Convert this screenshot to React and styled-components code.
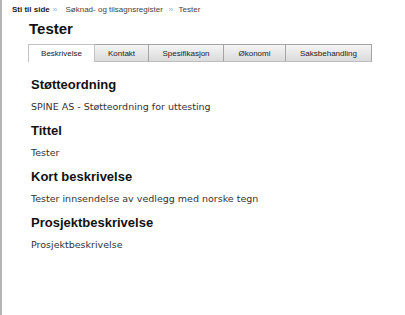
import React from 'react';
import styled, { createGlobalStyle } from 'styled-components';

const Global = createGlobalStyle`
  html, body { margin: 0; padding: 0; background: #fff; }
  body { font-family: "DejaVu Sans", Verdana, sans-serif; }
`;

const Page = styled.div`
  min-height: 315px;
  border-left: 2px solid #b4b4b4;
  box-sizing: border-box;
  padding: 5px 0 0 10px;
`;

const Crumbs = styled.div`
  display: flex;
  align-items: center;
  font-family: "Liberation Sans", Arial, sans-serif;
  font-size: 8px;
  line-height: 10px;
  color: #444;
`;

const CrumbLabel = styled.span`
  font-weight: bold;
  color: #222;
`;

const Sep = styled.span`
  color: #999;
  font-size: 7px;
  letter-spacing: -0.5px;
  margin: 0 ${p => p.$right}px 0 ${p => p.$left}px;
`;

const Title = styled.h1`
  margin: 5px 0 0 17px;
  font-family: "Liberation Sans", Arial, sans-serif;
  font-size: 15px;
  font-weight: bold;
  color: #111;
  line-height: 18px;
`;

const Tabs = styled.div`
  display: flex;
  margin: 6px 0 0 16px;
`;

const Tab = styled.div`
  width: ${p => p.$w}px;
  height: 18px;
  box-sizing: border-box;
  border-top: 1px solid ${p => (p.$active ? '#c4c4c4' : '#a4a4a4')};
  border-right: 1px solid ${p => (p.$active ? '#c4c4c4' : '#a4a4a4')};
  border-bottom: ${p => (p.$active ? 'none' : '1px solid #bdbdbd')};
  border-left: ${p => (p.$active ? '1px solid #c4c4c4' : 'none')};
  background: ${p => (p.$active ? '#fff' : 'linear-gradient(#f5f5f5, #dadada)')};
  font-family: "Liberation Sans", Arial, sans-serif;
  font-size: 8px;
  color: #222;
  display: flex;
  align-items: center;
  justify-content: center;
`;

const Body = styled.div`
  padding: 15px 0 0 19px;
`;

const Section = styled.div`
  margin-bottom: 10px;
`;

const Heading = styled.h2`
  margin: 0;
  font-family: "Liberation Sans", Arial, sans-serif;
  font-size: 13px;
  font-weight: bold;
  color: #111;
  line-height: 16px;
`;

const Text = styled.p`
  margin: 8px 0 0;
  font-size: 9.5px;
  color: #333;
  line-height: 12px;
`;

const tabs = [
  ['Beskrivelse', 67],
  ['Kontakt', 54],
  ['Spesifikasjon', 75],
  ['Økonomi', 62],
  ['Saksbehandling', 86],
];

const sections = [
  ['Støtteordning', 'SPINE AS - Støtteordning for uttesting'],
  ['Tittel', 'Tester'],
  ['Kort beskrivelse', 'Tester innsendelse av vedlegg med norske tegn'],
  ['Prosjektbeskrivelse', 'Prosjektbeskrivelse'],
];

const App = () => (
  <Page>
    <Global />
    <Crumbs>
      <CrumbLabel>Sti til side</CrumbLabel>
      <Sep $left={3} $right={9}>››</Sep>
      <span>Søknad- og tilsagnsregister</span>
      <Sep $left={6} $right={6}>››</Sep>
      <span>Tester</span>
    </Crumbs>
    <Title>Tester</Title>
    <Tabs>
      {tabs.map(([t, w], i) => (
        <Tab key={t} $w={w} $active={i === 0}>
          {t}
        </Tab>
      ))}
    </Tabs>
    <Body>
      {sections.map(([h, t]) => (
        <Section key={h}>
          <Heading>{h}</Heading>
          <Text>{t}</Text>
        </Section>
      ))}
    </Body>
  </Page>
);

export default App;
